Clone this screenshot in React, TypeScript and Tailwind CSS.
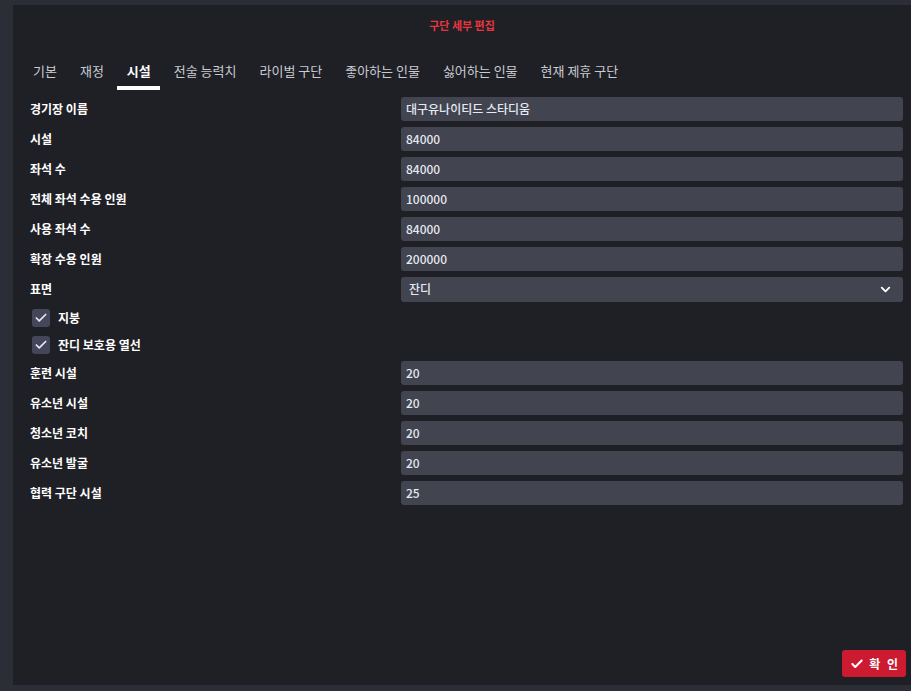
import { Check, ChevronDown } from "lucide-react";

const tabs = ["기본", "재정", "시설", "전술 능력치", "라이벌 구단", "좋아하는 인물", "싫어하는 인물", "현재 제휴 구단"];

const topFields: [string, string][] = [
  ["경기장 이름", "대구유나이티드 스타디움"],
  ["시설", "84000"],
  ["좌석 수", "84000"],
  ["전체 좌석 수용 인원", "100000"],
  ["사용 좌석 수", "84000"],
  ["확장 수용 인원", "200000"],
];

const bottomFields: [string, string][] = [
  ["훈련 시설", "20"],
  ["유소년 시설", "20"],
  ["청소년 코치", "20"],
  ["유소년 발굴", "20"],
  ["협력 구단 시설", "25"],
];

function Row({ label, children }: { label: string; children: React.ReactNode }) {
  return (
    <div className="flex h-[30px] items-center">
      <div className="w-[371px] text-[12px] font-bold text-white">{label}</div>
      <div className="flex-1">{children}</div>
    </div>
  );
}

function Field({ value }: { value: string }) {
  return (
    <div className="flex h-[24px] items-center rounded-[3px] bg-[#42444f] px-[5px] text-[12px] font-medium text-[#e4eaf3]">
      {value}
    </div>
  );
}

function CheckRow({ label }: { label: string }) {
  return (
    <div className="flex h-[27px] items-center gap-[8px] pl-[2px]">
      <span className="flex h-[18px] w-[18px] items-center justify-center rounded-[3px] bg-[#45465a]">
        <Check size={14} strokeWidth={3} className="text-[#e6e8ee]" />
      </span>
      <span className="text-[12px] font-bold text-white">{label}</span>
    </div>
  );
}

export default function App() {
  return (
    <div
      className="flex h-[691px] w-[911px] flex-col bg-[#2b2e36] pl-[13px] pt-[5px]"
      style={{ fontFamily: '"Noto Sans CJK KR", "Noto Sans", sans-serif' }}
    >
      <div className="flex h-[680px] flex-col bg-[#1f2026]">
        <div className="pt-[12px] text-center text-[11px] font-semibold text-[#e8353f]">구단 세부 편집</div>
        <div className="mt-[25px] flex gap-[23px] pl-[20px] text-[13px] text-[#c9cbd1]">
          {tabs.map((t) =>
            t === "시설" ? (
              <div key={t} className="relative font-bold text-white">
                <span className="block pb-[10px] pt-[2px]">{t}</span>
                <span className="absolute bottom-0 left-[-10px] right-[-9px] h-[4px] bg-white" />
              </div>
            ) : (
              <span key={t} className="block pb-[10px] pt-[2px]">{t}</span>
            )
          )}
        </div>
        <div className="mt-[4px] flex flex-col pl-[17px] pr-[8px]">
          {topFields.map(([l, v]) => (
            <Row key={l} label={l}>
              <Field value={v} />
            </Row>
          ))}
          <Row label="표면">
            <div className="flex h-[25px] items-center justify-between rounded-[3px] bg-[#42444f] pl-[8px] pr-[10px] text-[12px] font-medium text-[#e4eaf3]">
              잔디
              <ChevronDown size={15} strokeWidth={3} className="text-white" />
            </div>
          </Row>
          <CheckRow label="지붕" />
          <CheckRow label="잔디 보호용 열선" />
          {bottomFields.map(([l, v]) => (
            <Row key={l} label={l}>
              <Field value={v} />
            </Row>
          ))}
        </div>
        <div className="mt-auto flex justify-end pb-[8px] pr-[5px]">
          <button className="flex h-[27px] items-center gap-[5px] rounded-[3px] bg-[#cc1a30] pl-[8px] pr-[6px] text-[12px] font-bold tracking-[2px] text-white">
            <Check size={14} strokeWidth={3.5} />
            확 인
          </button>
        </div>
      </div>
    </div>
  );
}
